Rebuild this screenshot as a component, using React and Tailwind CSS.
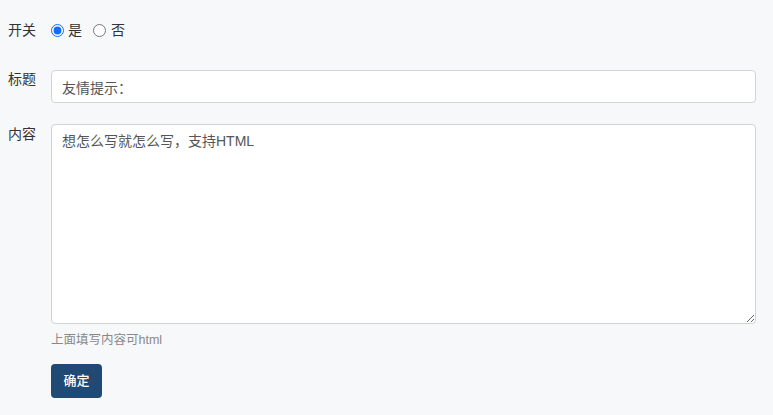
import React, { useState } from 'react';

export default function App() {
  const [enabled, setEnabled] = useState('yes');
  const [title, setTitle] = useState('友情提示：');
  const [content, setContent] = useState('想怎么写就怎么写，支持HTML');

  return (
    <div
      className="min-h-screen bg-[#f7f8fa] text-[#333] text-[14px] pt-[20px] px-2"
      style={{ fontFamily: '"Liberation Sans", Arial, "Noto Sans CJK SC", sans-serif' }}
    >
      {/* 开关 */}
      <div className="flex items-center h-5">
        <label className="w-[43px] leading-5">开关</label>
        <label className="flex items-center gap-[4px] leading-5">
          <input
            type="radio"
            name="enabled"
            checked={enabled === 'yes'}
            onChange={() => setEnabled('yes')}
            className="m-0 w-[13px] h-[13px] accent-[#0d6efd]"
          />
          <span>是</span>
        </label>
        <label className="flex items-center gap-[5px] leading-5 ml-[11px]">
          <input
            type="radio"
            name="enabled"
            checked={enabled === 'no'}
            onChange={() => setEnabled('no')}
            className="m-0 w-[13px] h-[13px]"
          />
          <span>否</span>
        </label>
      </div>

      {/* 标题 */}
      <div className="flex mt-[30px]">
        <label className="w-[43px] shrink-0 leading-5 -mt-px">标题</label>
        <input
          type="text"
          value={title}
          onChange={(e) => setTitle(e.target.value)}
          className="w-[705px] h-[33px] bg-white border border-[#ced4da] rounded-[4px] px-[10px] text-[#555] leading-5 outline-none"
        />
      </div>

      {/* 内容 */}
      <div className="flex mt-[21px]">
        <label className="w-[43px] shrink-0 leading-5">内容</label>
        <div className="flex flex-col">
          <textarea
            value={content}
            onChange={(e) => setContent(e.target.value)}
            className="w-[705px] h-[200px] bg-white border border-[#ced4da] rounded-[4px] px-[10px] py-[6px] text-[#555] leading-5 outline-none block"
          />
          <p className="text-[12.5px] text-[#888] leading-[17px] mt-[8px]">上面填写内容可html</p>
          <div className="mt-[15px]">
            <button className="w-[51px] h-[34px] bg-[#204a76] text-white text-[13px] font-medium rounded-[4px]">
              确定
            </button>
          </div>
        </div>
      </div>
    </div>
  );
}
